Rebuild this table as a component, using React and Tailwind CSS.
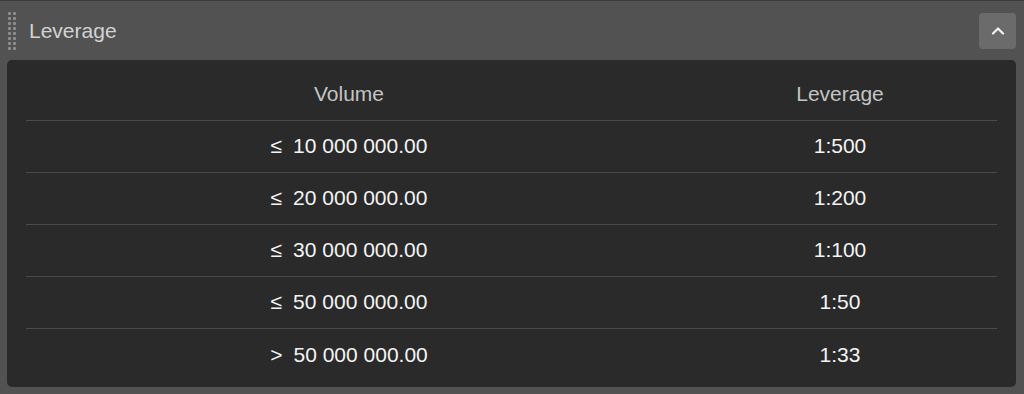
import React from "react";

const rows = [
  ["≤", "10 000 000.00", "1:500"],
  ["≤", "20 000 000.00", "1:200"],
  ["≤", "30 000 000.00", "1:100"],
  ["≤", "50 000 000.00", "1:50"],
  [">", "50 000 000.00", "1:33"],
];

function Grip() {
  return (
    <div className="grid grid-cols-2 gap-x-[2px] gap-y-[2px] w-[8px]">
      {Array.from({ length: 16 }).map((_, i) => (
        <div key={i} className="w-[3px] h-[3px] rounded-[1px] bg-[#8e8e8e]" />
      ))}
    </div>
  );
}

export default function App() {
  return (
    <div
      className="w-[1024px] h-[394px] bg-[#525252] border-t border-[#3c3c3c] flex flex-col"
      style={{ fontFamily: '"Liberation Sans", Arial, sans-serif' }}
    >
      <div className="h-[59px] flex items-center pl-[8px] pr-[8px]">
        <div className="pt-[1px]">
          <Grip />
        </div>
        <span className="ml-[13px] text-[21px] text-[#d2d2d2] leading-none">Leverage</span>
        <button className="ml-auto w-[37px] h-[36px] rounded-[4px] bg-[#6b6b6b] flex items-center justify-center">
          <svg width="14" height="9" viewBox="0 0 14 9" fill="none">
            <path d="M2 7.5 L7 2.5 L12 7.5" stroke="#f2f2f2" strokeWidth="2.2" strokeLinecap="round" strokeLinejoin="round" />
          </svg>
        </button>
      </div>
      <div className="ml-[7px] mr-[8px] h-[327px] bg-[#2a2a2a] rounded-[5px] px-[19px] pt-[9px]">
        <div className="flex h-[52px] items-center border-b border-[#4a4a4a] text-[21px] text-[#c4c4c4] pb-[1px]">
          <div className="w-[646px] text-center">Volume</div>
          <div className="flex-1 pl-[11px] text-center">Leverage</div>
        </div>
        {rows.map((r, i) => (
          <div
            key={i}
            className={
              "flex h-[52px] items-center text-[21px] text-[#f4f4f4] pb-[1px] " +
              (i < rows.length - 1 ? "border-b border-[#4a4a4a]" : "")
            }
          >
            <div className="w-[646px] flex justify-center">
              <span>{r[0]}</span>
              <span className="ml-[11px]">{r[1]}</span>
            </div>
            <div className="flex-1 pl-[11px] text-center">{r[2]}</div>
          </div>
        ))}
      </div>
    </div>
  );
}
